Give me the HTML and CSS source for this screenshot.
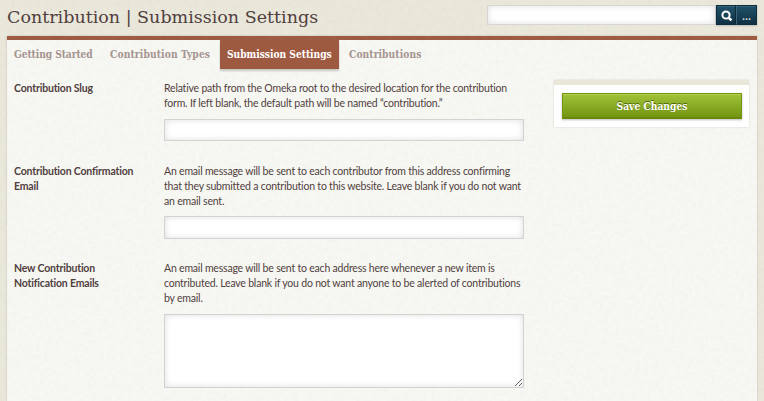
FILE: index.html
```html
<!DOCTYPE html>
<html lang="en">
<head>
<meta charset="utf-8">
<title>Contribution | Submission Settings</title>
<link rel="stylesheet" href="styles.css">
</head>
<body>
<svg class="grain" width="764" height="401" aria-hidden="true">
  <filter id="paper" x="0" y="0" width="100%" height="100%">
    <feTurbulence type="fractalNoise" baseFrequency="0.25" numOctaves="3" seed="4"/>
    <feColorMatrix values="0 0 0 0 0.45  0 0 0 0 0.43  0 0 0 0 0.33  1.2 0 0 0 -0.45"/>
  </filter>
  <rect width="764" height="401" filter="url(#paper)"/>
</svg>
<header class="top">
  <h1>Contribution | Submission Settings</h1>
  <form class="search">
    <input type="text" class="search-field" aria-label="Search">
    <button type="button" class="search-btn" aria-label="Submit search">
      <svg width="12" height="12" viewBox="0 0 12 12"><circle cx="5" cy="5" r="3.6" fill="none" stroke="#fff" stroke-width="2"/><path d="M7.8 7.8L10.4 10.4" stroke="#fff" stroke-width="2.6"/></svg>
    </button>
    <button type="button" class="search-btn more" aria-label="Advanced search"><span>...</span></button>
  </form>
</header>
<main class="content">
  <nav class="tabs">
    <a class="tab t1">Getting Started</a>
    <a class="tab t2">Contribution Types</a>
    <a class="tab active">Submission Settings</a>
    <a class="tab t4">Contributions</a>
  </nav>
  <div class="columns">
    <div class="fields">
      <section class="field">
        <label>Contribution Slug</label>
        <div class="inputs">
          <p>Relative path from the Omeka root to the desired location for the contribution<br>form. If left blank, the default path will be named “contribution.”</p>
          <input type="text" class="box">
        </div>
      </section>
      <section class="field">
        <label>Contribution Confirmation<br>Email</label>
        <div class="inputs">
          <p class="long">An email message will be sent to each contributor from this address confirming<br>that they submitted a contribution to this website. Leave blank if you do not want<br>an email sent.</p>
          <input type="text" class="box">
        </div>
      </section>
      <section class="field">
        <label>New Contribution<br>Notification Emails</label>
        <div class="inputs">
          <p>An email message will be sent to each address here whenever a new item is<br>contributed. Leave blank if you do not want anyone to be alerted of contributions<br>by email.</p>
          <textarea class="box area"></textarea>
        </div>
      </section>
    </div>
    <aside class="panel"><button type="button" class="save">Save Changes</button></aside>
  </div>
</main>
</body>
</html>
```
FILE: styles.css
```css
* { box-sizing: border-box; }
body {
  margin: 0;
  height: 401px;
  overflow: hidden;
  background: #eae7db;
  color: #4f3d3d;
  font-family: Lato, sans-serif;
}
.grain { position: absolute; left: 0; top: 0; opacity: .1; pointer-events: none; }
.top { display: flex; justify-content: space-between; height: 36px; padding: 5px 7px 0; }
h1 {
  margin: 0;
  font: normal 17.5px/24px "DejaVu Serif", serif;
  white-space: nowrap;
}
.search { position: relative; display: flex; width: 270px; height: 20px; }
.search-field { flex: 1; min-width: 0; padding: 0; border: 1px solid #d6d6d6; background: #fff; box-shadow: inset 0 0 6px #ddd; }
.search-btn {
  display: flex; align-items: center; justify-content: center;
  width: 20px; height: 20px; padding: 2px 0 0 2px;
  border: 1px solid #0c2e3d;
  background: linear-gradient(#205269, #103142);
  box-shadow: inset 0 1px 0 #35627a, 0 1px 2px #0003;
}
.search-btn.more { width: 21px; padding: 0; border-left-color: #3f6476; color: #d9e2e6; font: 13px/16px Lato, sans-serif; }
.content {
  height: 365px;
  margin: 0 7px;
  border-top: 4px solid #9e5a40;
  background: #f7f8f3;
  box-shadow: 0 0 2px #0003;
}
.tabs { display: flex; height: 29px; }
.tab {
  font: bold 10.2px/28px "DejaVu Serif Condensed", "DejaVu Serif", serif;
  font-stretch: condensed;
  letter-spacing: -.09px;
  color: #a59390;
  white-space: nowrap;
}
.t1 { width: 96px; margin-left: 7px; }
.t2 { width: 110px; letter-spacing: .13px; }
.active { position: relative; width: 119px; padding-left: 7px; letter-spacing: -.03px; background: #9e5a40; color: #fff; box-shadow: 0 2px 2px #0003; }
.t4 { margin-left: 10px; letter-spacing: .08px; }
.columns { display: flex; justify-content: space-between; padding: 12px 8px 0 7px; }
.fields { width: 510px; }
.field { display: flex; margin-bottom: 23px; }
label { width: 150px; font-size: 10.5px; font-weight: bold; line-height: 15px; letter-spacing: -.18px; white-space: nowrap; }
.inputs { width: 360px; }
p { margin: 0 0 8px; font-size: 10.5px; line-height: 15px; letter-spacing: -.2px; white-space: nowrap; }
p.long { margin-bottom: 7px; }
.box { position: relative; display: block; width: 360px; height: 22px; margin: 0; border: 1px solid #d2d3d3; border-radius: 0; background: #fff; box-shadow: inset 0 0 6px #ddd; outline: 0; }
.long + .box { height: 23px; }
.area { height: 74px; resize: both; }
.field:nth-child(2) { margin-bottom: 22px; }
.panel { position: relative; width: 195px; height: 47px; margin-top: -1px; padding: 8px 7px 8px 8px; border-top: 5px solid #e9e7da; background: #fff; box-shadow: 0 0 2px #0002; }
.save {
  display: block; width: 180px; height: 26px; padding: 0;
  border: 1px solid #749510;
  border-bottom: 2px solid #688a0a;
  background: linear-gradient(#a1c33a, #749510);
  box-shadow: inset 0 1px 0 #b2d04e, 0 1px 2px #0004;
  color: #fff;
  font: bold 10.2px/20px "DejaVu Serif Condensed", "DejaVu Serif", serif;
  text-shadow: 0 -1px 0 #4c6505;
}
```
